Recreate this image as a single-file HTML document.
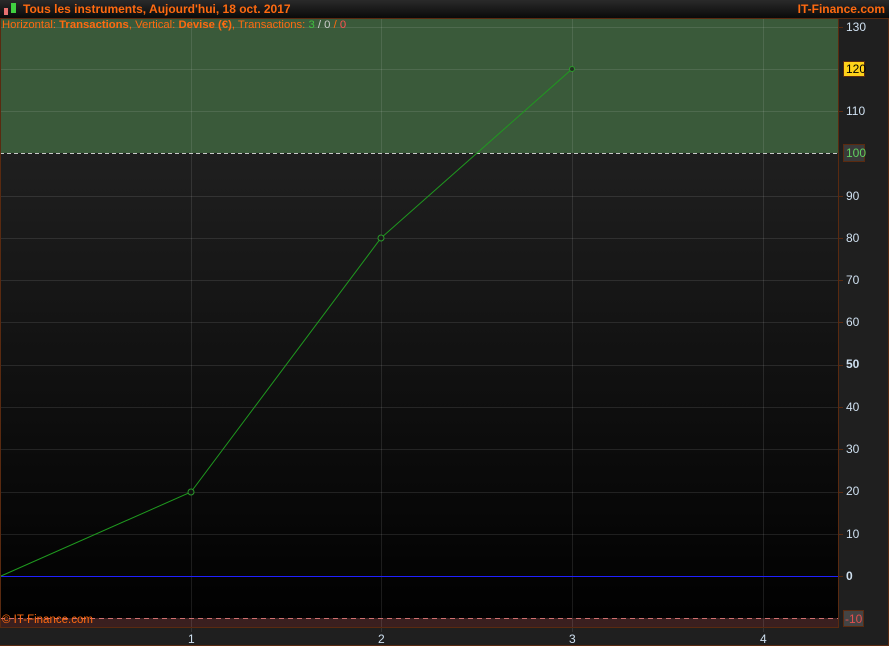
<!DOCTYPE html>
<html><head><meta charset="utf-8"><style>
body{margin:0;width:889px;height:646px;overflow:hidden;background:#1f1f1f;font-family:"Liberation Sans",sans-serif;}
#t{position:absolute;left:0;top:0;width:889px;height:18px;background:linear-gradient(#2a2a2a,#0a0a0a);}
.lab{position:absolute;font-size:12px;color:#cfe0f0;}
</style></head><body>
<div id="t"></div>
<svg width="889" height="646" style="position:absolute;left:0;top:0">
<defs><linearGradient id="g" x1="0" y1="0" x2="0" y2="1"><stop offset="0" stop-color="#282828"/><stop offset="1" stop-color="#000"/></linearGradient></defs>
<rect x="0" y="18" width="838" height="609" fill="url(#g)"/>
<rect x="0" y="18" width="838" height="135" fill="#3a5a3a"/>
<rect x="0" y="618" width="838" height="9" fill="#3a1f1f"/>
<g stroke="#ffffff" stroke-opacity="0.1" stroke-width="1">
<line x1="0" x2="838" y1="27.5" y2="27.5"/><line x1="0" x2="838" y1="69.5" y2="69.5"/><line x1="0" x2="838" y1="111.5" y2="111.5"/>
<line x1="0" x2="838" y1="196.5" y2="196.5"/><line x1="0" x2="838" y1="238.5" y2="238.5"/><line x1="0" x2="838" y1="280.5" y2="280.5"/><line x1="0" x2="838" y1="322.5" y2="322.5"/><line x1="0" x2="838" y1="365.5" y2="365.5"/><line x1="0" x2="838" y1="407.5" y2="407.5"/><line x1="0" x2="838" y1="449.5" y2="449.5"/><line x1="0" x2="838" y1="492.5" y2="492.5"/><line x1="0" x2="838" y1="534.5" y2="534.5"/>
<line x1="191.5" x2="191.5" y1="18" y2="632"/><line x1="381.5" x2="381.5" y1="18" y2="632"/><line x1="572.5" x2="572.5" y1="18" y2="632"/><line x1="763.5" x2="763.5" y1="18" y2="632"/>
</g>
<line x1="0" x2="838" y1="153.5" y2="153.5" stroke="#c8c8c8" stroke-dasharray="4,3"/>
<line x1="0" x2="838" y1="618.5" y2="618.5" stroke="#d07070" stroke-dasharray="5,4"/>
<line x1="0" x2="838" y1="576.5" y2="576.5" stroke="#2020ff"/>
<polyline points="1,576 191,492 381,238 572,69" fill="none" stroke="#1f9a1f" stroke-width="1"/>
<circle cx="191" cy="492" r="3" fill="#111" stroke="#2a9a2a"/>
<circle cx="381" cy="238" r="3" fill="#1a1a1a" stroke="#2a9a2a"/>
<circle cx="572" cy="69" r="2.5" fill="#223322" stroke="#2a9a2a"/>
<g stroke="#5a2a10"><rect x="0.5" y="18.5" width="838" height="609" fill="none"/><line x1="0" x2="889" y1="645.5" y2="645.5"/><line x1="888.5" x2="888.5" y1="18" y2="646"/><line x1="0" x2="889" y1="18.5" y2="18.5"/></g>
<g stroke="#5a2a10">
<line x1="838" x2="843" y1="27.5" y2="27.5"/><line x1="838" x2="843" y1="111.5" y2="111.5"/><line x1="838" x2="843" y1="196.5" y2="196.5"/><line x1="838" x2="843" y1="238.5" y2="238.5"/><line x1="838" x2="843" y1="280.5" y2="280.5"/><line x1="838" x2="843" y1="322.5" y2="322.5"/><line x1="838" x2="843" y1="365.5" y2="365.5"/><line x1="838" x2="843" y1="407.5" y2="407.5"/><line x1="838" x2="843" y1="449.5" y2="449.5"/><line x1="838" x2="843" y1="492.5" y2="492.5"/><line x1="838" x2="843" y1="534.5" y2="534.5"/><line x1="838" x2="843" y1="576.5" y2="576.5"/>
</g>
<rect x="843.5" y="61.5" width="21" height="15" fill="#ffd21a" stroke="#5a2a10"/>
<rect x="843.5" y="144.5" width="21" height="17" fill="#3a3a3a" stroke="#5a2a10"/>
<rect x="843.5" y="610.5" width="20" height="16" fill="#444" stroke="#5a2a10"/>
<rect x="4" y="8" width="4" height="7" fill="#e87070"/><rect x="11" y="3" width="5" height="10" fill="#40d040"/>
</svg>
<div style="position:absolute;left:23px;top:2px;font-size:12px;font-weight:bold;color:#ff6a10">Tous les instruments, Aujourd'hui, 18 oct. 2017</div>
<div style="position:absolute;right:4px;top:2px;font-size:12px;font-weight:bold;color:#ff6a10">IT-Finance.com</div>
<div style="position:absolute;left:2px;top:19px;font-size:11.3px;color:#ff6a10">Horizontal: <b>Transactions</b>, Vertical: <b>Devise (€)</b>, Transactions: <span style="color:#40c040">3</span> <span style="color:#ccc">/ 0</span> / <span style="color:#ff5050">0</span></div>
<div style="position:absolute;left:2px;top:614px;font-size:11.5px;color:#ff6a10">© IT-Finance.com</div>
<div class="lab" style="left:846px;top:20px">130</div>
<div class="lab" style="left:846px;top:62px;color:#000">120</div>
<div class="lab" style="left:846px;top:104px">110</div>
<div class="lab" style="left:846px;top:146px;color:#60d060">100</div>
<div class="lab" style="left:846px;top:189px">90</div>
<div class="lab" style="left:846px;top:231px">80</div>
<div class="lab" style="left:846px;top:273px">70</div>
<div class="lab" style="left:846px;top:315px">60</div>
<div class="lab" style="left:846px;top:357px;font-weight:bold">50</div>
<div class="lab" style="left:846px;top:400px">40</div>
<div class="lab" style="left:846px;top:442px">30</div>
<div class="lab" style="left:846px;top:484px">20</div>
<div class="lab" style="left:846px;top:527px">10</div>
<div class="lab" style="left:846px;top:569px;font-weight:bold">0</div>
<div class="lab" style="left:845px;top:612px;color:#e05050">-10</div>
<div class="lab" style="left:188px;top:632px">1</div>
<div class="lab" style="left:378px;top:632px">2</div>
<div class="lab" style="left:569px;top:632px">3</div>
<div class="lab" style="left:760px;top:632px">4</div>
</body></html>
